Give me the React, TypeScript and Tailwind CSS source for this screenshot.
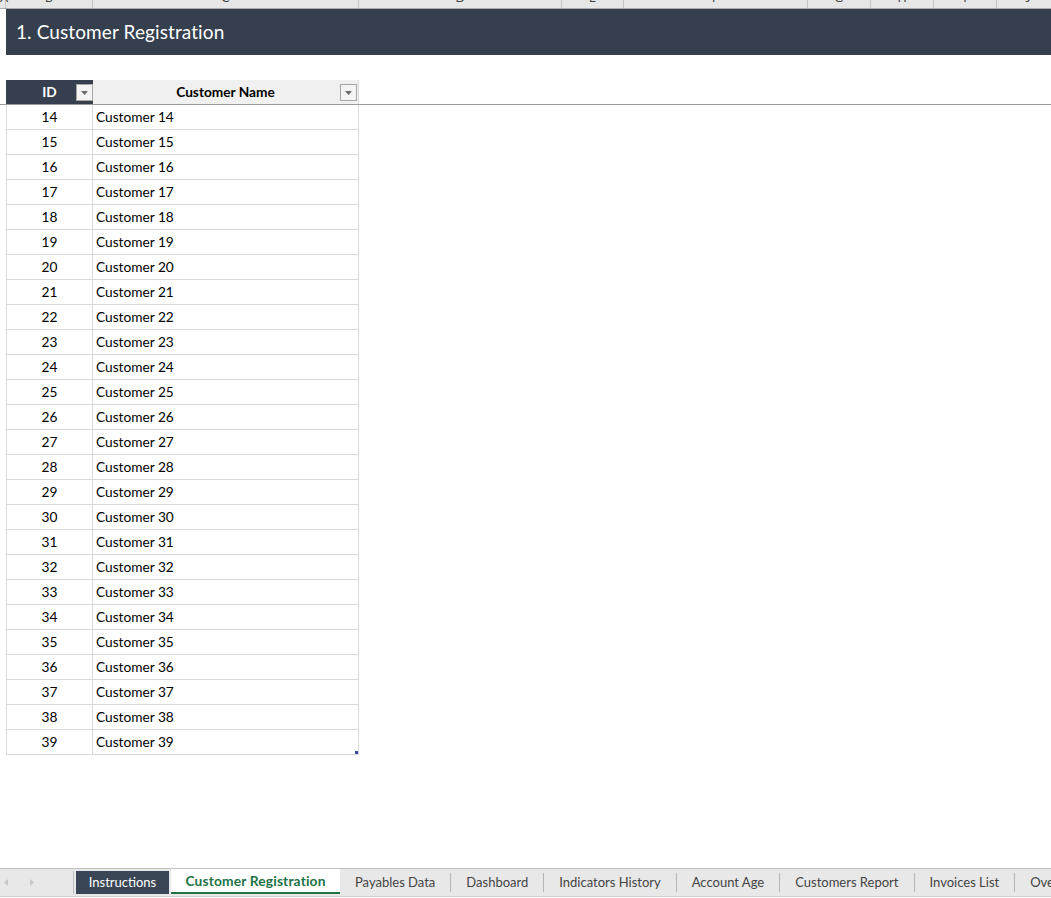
import React from "react";

const cols = [
  { l: "A", w: 6 },
  { l: "B", w: 87 },
  { l: "C", w: 266 },
  { l: "D", w: 203 },
  { l: "E", w: 62 },
  { l: "F", w: 184 },
  { l: "G", w: 63 },
  { l: "H", w: 63 },
  { l: "I", w: 63 },
  { l: "J", w: 63 },
];

const ids = Array.from({ length: 26 }, (_, i) => 14 + i);

const tabs = [
  "Payables Data",
  "Dashboard",
  "Indicators History",
  "Account Age",
  "Customers Report",
  "Invoices List",
  "Overview",
];

function FilterBtn() {
  return (
    <div className="w-[17px] h-[17px] border border-[#a6a6a6] bg-[#f4f4f4] flex items-center justify-center">
      <svg width="7" height="4" viewBox="0 0 7 4">
        <path d="M0 0 L7 0 L3.5 4 Z" fill="#6b6b6b" />
      </svg>
    </div>
  );
}

export default function App() {
  return (
    <div
      className="w-[1051px] h-[898px] bg-white flex flex-col overflow-hidden text-black"
      style={{ fontFamily: "Lato, Carlito, 'Liberation Sans', sans-serif" }}
    >
      {/* column header strip */}
      <div className="h-[9px] flex bg-[#e6e6e6] border-b border-[#ababab] overflow-hidden shrink-0">
        {cols.map((c) => (
          <div
            key={c.l}
            className="shrink-0 h-full relative border-r border-[#c4c4c4]"
            style={{ width: c.w }}
          >
            <span className="absolute left-0 right-0 text-center text-[12px] leading-none text-[#444] top-[-8px]">
              {c.l}
            </span>
          </div>
        ))}
      </div>

      {/* banner */}
      <div className="h-[46px] ml-[6px] bg-[#353f4e] flex items-center pl-[10px] shrink-0">
        <span className="text-white text-[19px] tracking-[0.1px]">1. Customer Registration</span>
      </div>

      <div className="h-[25px] shrink-0" />

      {/* header row */}
      <div className="h-[24px] flex shrink-0">
        <div className="w-[6px] shrink-0" />
        <div className="w-[87px] shrink-0 bg-[#353f4e] flex items-center justify-center relative">
          <span className="text-white font-bold text-[13.7px] pt-[1px]">ID</span>
          <div className="absolute right-[0px] top-[4px]">
            <FilterBtn />
          </div>
        </div>
        <div className="w-[266px] shrink-0 bg-[#f0f0f0] flex items-center justify-center relative border-r border-[#d9d9d9]">
          <span className="font-bold text-[13.7px] pt-[1px]">Customer Name</span>
          <div className="absolute right-[1px] top-[4px]">
            <FilterBtn />
          </div>
        </div>
      </div>
      <div className="h-px bg-[#9a9a9a] shrink-0" />

      {/* data rows */}
      <div className="flex flex-col shrink-0">
        {ids.map((id) => (
          <div key={id} className="h-[25px] flex">
            <div className="w-[6px] shrink-0" />
            <div className="w-[87px] shrink-0 border-l border-b border-r border-[#d9d9d9] flex items-center justify-center pt-[1px] text-[13.7px]">
              {id}
            </div>
            <div className="w-[266px] shrink-0 border-b border-r border-[#d9d9d9] flex items-center pl-[3px] pt-[1px] text-[13.7px] relative">
              Customer {id}
              {id === 39 && (
                <div className="absolute right-[0px] bottom-[0px] w-[3px] h-[3px] bg-[#3b4a9c]" />
              )}
            </div>
          </div>
        ))}
      </div>

      <div className="flex-1" />

      {/* sheet tab bar */}
      <div className="h-[29px] bg-[#e8e8e8] border-t border-[#c0c0c0] border-b border-b-[#d0d0d0] flex items-stretch shrink-0 mb-[1px] text-[13px] text-[#444] whitespace-nowrap">
        <div className="w-[74px] shrink-0 flex items-center pl-[4px] gap-[22px] border-r border-[#bdbdbd] my-[2px]">
          <svg width="4" height="7" viewBox="0 0 4 7">
            <path d="M4 0 L0 3.5 L4 7 Z" fill="#c8c8c8" />
          </svg>
          <svg width="4" height="7" viewBox="0 0 4 7">
            <path d="M0 0 L4 3.5 L0 7 Z" fill="#c8c8c8" />
          </svg>
        </div>
        <div className="shrink-0 ml-[2px] my-[2px] w-[93px] justify-center bg-[#3a4555] text-white flex items-center">
          Instructions
        </div>
        <div className="shrink-0 ml-[2px] mb-[2px] pt-[2px] w-[169px] justify-center bg-white text-[#217346] font-bold text-[13.8px] tracking-[0.15px] flex items-center border-b-2 border-[#217346]">
          Customer Registration
        </div>
        {tabs.map((t, i) => (
          <div key={t} className="flex items-center shrink-0">
            <div className="px-[15px]">{t}</div>
            {i < tabs.length - 1 && <div className="w-px h-[19px] bg-[#b5b5b5]" />}
          </div>
        ))}
      </div>
    </div>
  );
}
